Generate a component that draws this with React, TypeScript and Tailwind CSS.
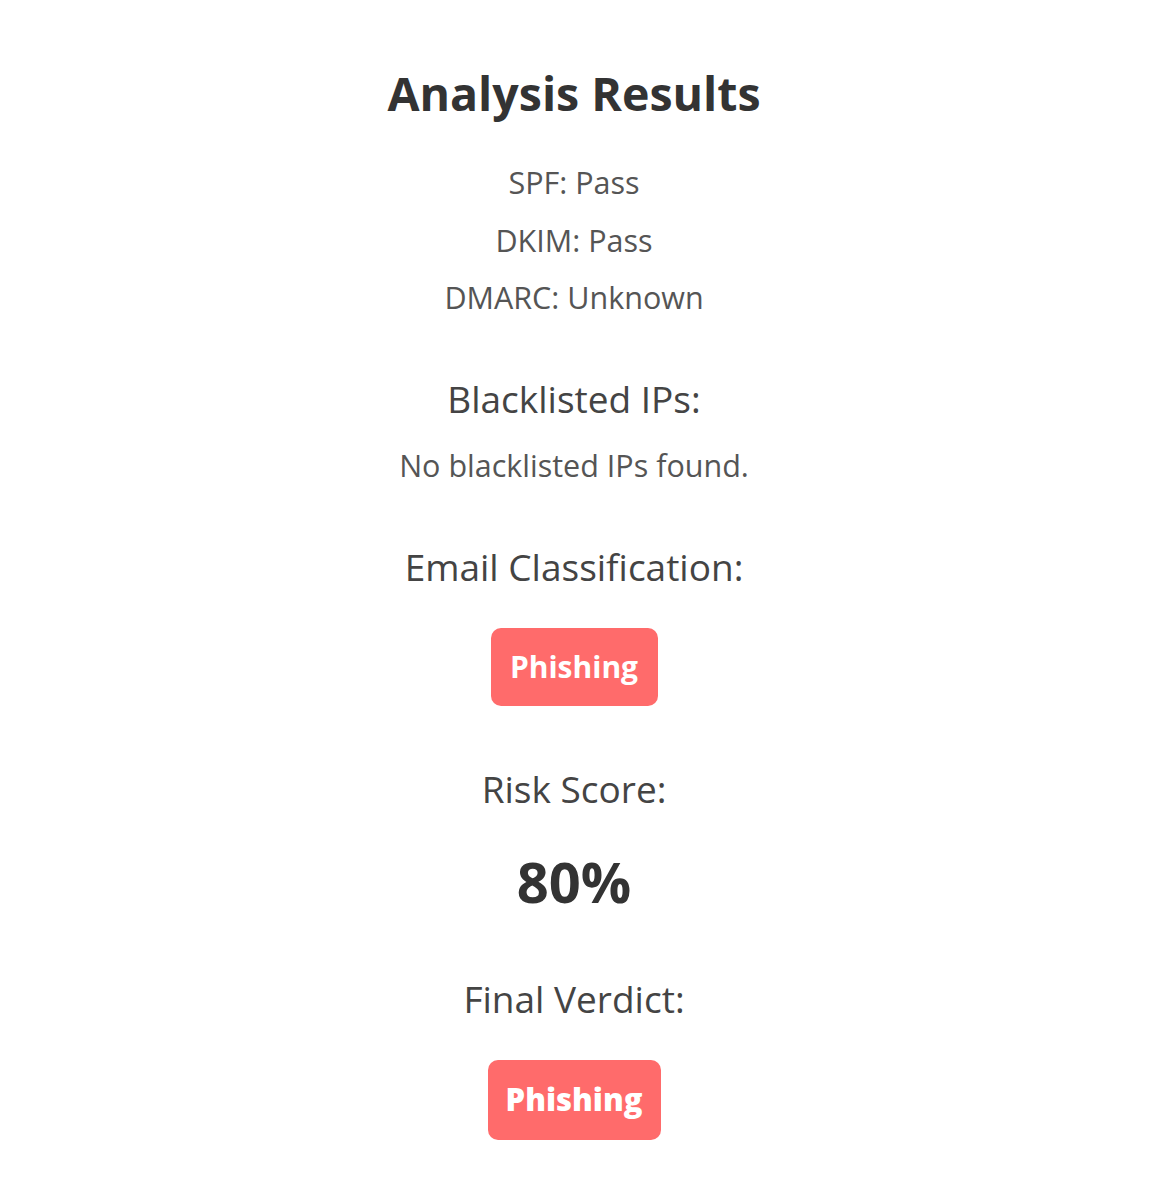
export default function App() {
  return (
    <main
      className="min-h-screen bg-white pr-[24px] text-center text-[#555]"
      style={{ fontFamily: '"Open Sans", "Noto Sans", sans-serif' }}
    >
      <div className="flex flex-col items-center">
        <h1 className="mt-[63px] text-[46.5px] font-bold leading-[60px] text-[#333]">Analysis Results</h1>

        <div className="mt-[31px] flex flex-col items-center text-[30.5px] leading-[57.5px]">
          <p>SPF: Pass</p>
          <p>DKIM: Pass</p>
          <p>DMARC: Unknown</p>
        </div>

        <h2 className="mt-[48px] text-[37px] leading-[48px] text-[#444]">Blacklisted IPs:</h2>
        <p className="mt-[22px] text-[30.5px] leading-[40px]">No blacklisted IPs found.</p>

        <h2 className="mt-[58px] text-[37px] leading-[48px] text-[#444]">Email Classification:</h2>
        <span className="mt-[37px] flex h-[78px] w-[167px] items-center justify-center rounded-[10px] bg-[#ff6b6b] text-[30px] font-bold text-white">
          Phishing
        </span>

        <h2 className="mt-[59px] text-[37px] leading-[48px] text-[#444]">Risk Score:</h2>
        <p className="mt-[38px] text-[56px] font-bold leading-[60px] text-[#333]">80%</p>

        <h2 className="mt-[64px] text-[37px] leading-[48px] text-[#444]">Final Verdict:</h2>
        <span className="mt-[37px] flex h-[80px] w-[173px] items-center justify-center rounded-[10px] bg-[#ff6b6b] text-[31px] font-extrabold text-white">
          Phishing
        </span>
      </div>
    </main>
  );
}
